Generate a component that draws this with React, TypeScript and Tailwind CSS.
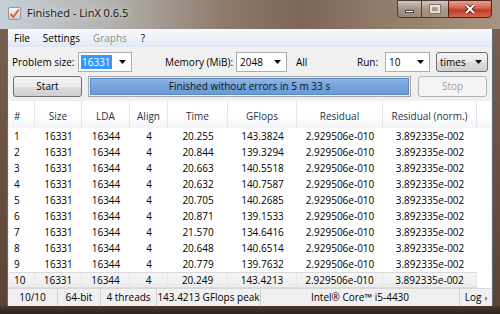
import React from "react";

// LinX 0.6.5 results window, Windows 7 Aero frame
const rows = [
  ["1", "20.255", "143.3824"],
  ["2", "20.844", "139.3294"],
  ["3", "20.663", "140.5518"],
  ["4", "20.632", "140.7587"],
  ["5", "20.705", "140.2685"],
  ["6", "20.871", "139.1533"],
  ["7", "21.570", "134.6416"],
  ["8", "20.648", "140.6514"],
  ["9", "20.779", "139.7632"],
  ["10", "20.249", "143.4213"],
];

const cols = [
  { title: "#", w: "w-[26px]", left: true },
  { title: "Size", w: "w-[47px]" },
  { title: "LDA", w: "w-[48px]" },
  { title: "Align", w: "w-[38px]" },
  { title: "Time", w: "w-[60px]" },
  { title: "GFlops", w: "w-[69px]" },
  { title: "Residual", w: "w-[86px]" },
  { title: "Residual (norm.)", w: "w-[94px]" },
];

function Arrow() {
  return (
    <svg className="ml-auto mr-[5px] shrink-0" width="7" height="4" viewBox="0 0 7 4">
      <path d="M0 0h7L3.5 4z" fill="#111" />
    </svg>
  );
}

function Combo({ value, width, selected }: { value: string; width: string; selected?: boolean }) {
  return (
    <div className={`flex h-[20px] items-center border border-[#abadb3] bg-white pl-[2px] ${width}`}>
      <span className={selected ? "bg-[#3399ff] px-[1px] leading-[14px] text-white" : "px-[1px]"}>{value}</span>
      <Arrow />
    </div>
  );
}

export default function App() {
  return (
    <div className="flex h-[314px] w-[500px] flex-col overflow-hidden bg-[linear-gradient(180deg,#7a6252_0%,#6b5141_50%,#5a4234_100%)] font-['Open_Sans',sans-serif] text-[10px] text-black">
      {/* Title bar */}
      <div className="flex h-[29px] shrink-0 items-start bg-[linear-gradient(90deg,#c6d0d9_0%,#b4b2ae_22%,#8e7a6b_45%,#7d6655_60%,#957f6d_80%,#a89380_100%)]">
        <div className="ml-[8px] mt-[7px] flex h-[13px] w-[13px] items-center justify-center rounded-[2px] border border-[#8e97a0] bg-[linear-gradient(180deg,#f4f6f8,#c9ced4)]">
          <svg width="11" height="11" viewBox="0 0 11 11">
            <path d="M1.5 6l2.8 3L9.8 1.5" fill="none" stroke="#e0602a" strokeWidth="2" />
          </svg>
        </div>
        <div className="ml-[6px] mt-[5px] text-[11px] text-[#111] [text-shadow:0_0_6px_rgba(255,255,255,0.95)]">
          Finished - LinX 0.6.5
        </div>
        <div className="ml-auto mr-[8px] flex h-[18px]">
          <div className="flex w-[25px] items-center justify-center rounded-bl-[4px] border border-[#4a3c33] bg-[linear-gradient(180deg,rgba(255,255,255,0.55),rgba(255,255,255,0.15)_50%,rgba(255,255,255,0.05))]">
            <div className="mt-[5px] h-[3px] w-[9px] border border-[#444] bg-white" />
          </div>
          <div className="flex w-[26px] items-center justify-center border-y border-[#4a3c33] bg-[linear-gradient(180deg,rgba(255,255,255,0.55),rgba(255,255,255,0.15)_50%,rgba(255,255,255,0.05))]">
            <div className="h-[8px] w-[10px] border-[2px] border-white/70 outline outline-1 outline-[#777]" />
          </div>
          <div className="flex w-[44px] items-center justify-center rounded-br-[4px] border border-[#4a2018] bg-[linear-gradient(180deg,#e8a193_0%,#d2604c_45%,#c03a24_55%,#d4664e_100%)]">
            <svg width="12" height="10" viewBox="0 0 12 10">
              <path d="M2 1l8 8M10 1L2 9" stroke="#3a1a14" strokeWidth="3.4" />
              <path d="M2 1l8 8M10 1L2 9" stroke="#fff" strokeWidth="2" />
            </svg>
          </div>
        </div>
      </div>

      {/* Client area */}
      <div className="mx-[7px] flex h-[277px] shrink-0 flex-col border-x border-[#5b6b7b] bg-[#f0f0f0]">
        {/* Menu bar */}
        <div className="flex h-[18px] items-center gap-[13px] bg-[linear-gradient(180deg,#f6f8fc_0%,#eef2f9_55%,#dfe7f3_100%)] pl-[6px]">
          <span>File</span>
          <span>Settings</span>
          <span className="text-[#8d8d8d]">Graphs</span>
          <span className="ml-[1px]">?</span>
        </div>

        {/* Settings row */}
        <div className="mt-[5px] flex h-[20px] items-center pl-[4px]">
          <span className="w-[66px]">Problem size:</span>
          <Combo value="16331" width="w-[54px]" selected />
          <span className="ml-[33px] w-[71px]">Memory (MiB):</span>
          <Combo value="2048" width="w-[51px]" />
          <span className="ml-[9px] w-[61px]">All</span>
          <span className="w-[28px]">Run:</span>
          <Combo value="10" width="w-[45px]" />
          <div className="ml-[6px] flex h-[20px] w-[52px] items-center rounded-[3px] border border-[#707070] bg-[linear-gradient(180deg,#f2f2f2_0%,#ebebeb_50%,#dddddd_51%,#cfcfcf_100%)] pl-[3px]">
            <span>times</span>
            <Arrow />
          </div>
        </div>

        {/* Action row */}
        <div className="mt-[4px] flex h-[21px] items-stretch pl-[5px]">
          <div className="flex w-[69px] items-center justify-center rounded-[3px] border border-[#707070] bg-[linear-gradient(180deg,#f2f2f2_0%,#ebebeb_50%,#dddddd_51%,#cfcfcf_100%)]">
            Start
          </div>
          <div className="ml-[6px] flex w-[323px] items-center justify-center border border-[#a8a8a8] p-[1px]">
            <div className="flex h-full w-full items-center justify-center border border-[#5a88c4] bg-[linear-gradient(180deg,#8fb6e6_0%,#78a5dc_40%,#6b9ad6_100%)] text-[#111]">
              Finished without errors in 5 m 33 s
            </div>
          </div>
          <div className="ml-[7px] flex w-[69px] items-center justify-center rounded-[3px] border border-[#adb2b5] bg-[#f4f4f4] text-[#a0a0a0]">
            Stop
          </div>
        </div>

        {/* Results table */}
        <div className="mx-[1px] mt-[4px] flex h-[187px] flex-col bg-white">
          <div className="flex h-[27px] bg-[linear-gradient(180deg,#ffffff_0%,#ffffff_60%,#f3f4f6_100%)] text-[#1f3349]">
            {cols.map((c) => (
              <div
                key={c.title}
                className={`flex h-full items-center border-r border-[#e3e6ea] pt-[4px] ${c.w} ${c.left ? "pl-[5px]" : "justify-center"}`}
              >
                {c.title}
              </div>
            ))}
            <div className="flex-1" />
          </div>
          {rows.map(([n, time, gf], i) => {
            const sel = i === rows.length - 1;
            const cells = [n, "16331", "16344", "4", time, gf, "2.929506e-010", "3.892335e-002"];
            return (
              <div key={n} className="flex h-[16px]">
                {cells.map((v, j) => (
                  <div
                    key={j}
                    className={`flex h-full items-center ${cols[j].w} ${cols[j].left ? "pl-[5px]" : "justify-center"} ${
                      sel ? "border-y border-r border-y-[#dadada] border-r-[#e6e6e6] bg-[linear-gradient(180deg,#f6f6f6_0%,#ececec_100%)]" : ""
                    }`}
                  >
                    {v}
                  </div>
                ))}
                <div className="flex-1" />
              </div>
            );
          })}
        </div>

        {/* Status bar */}
        <div className="flex h-[18px] items-stretch border-t border-[#d7d7d7] bg-[#f0f0f0]">
          <div className="flex w-[50px] items-center justify-center border-r border-[#cfcfcf]">10/10</div>
          <div className="flex w-[43px] items-center justify-center border-r border-[#cfcfcf]">64-bit</div>
          <div className="flex w-[56px] items-center justify-center border-r border-[#cfcfcf]">4 threads</div>
          <div className="flex w-[104px] items-center justify-center border-r border-[#cfcfcf]">143.4213 GFlops peak</div>
          <div className="flex w-[199px] items-center justify-center border-r border-[#cfcfcf]">Intel® Core™ i5-4430</div>
          <div className="flex flex-1 items-center justify-center gap-[3px]">
            <span>Log</span>
            <span className="text-[9px]">›</span>
          </div>
        </div>
      </div>

      {/* Bottom frame */}
      <div className="flex-1 bg-[linear-gradient(180deg,#4a382e,#2e241e)]" />
    </div>
  );
}
